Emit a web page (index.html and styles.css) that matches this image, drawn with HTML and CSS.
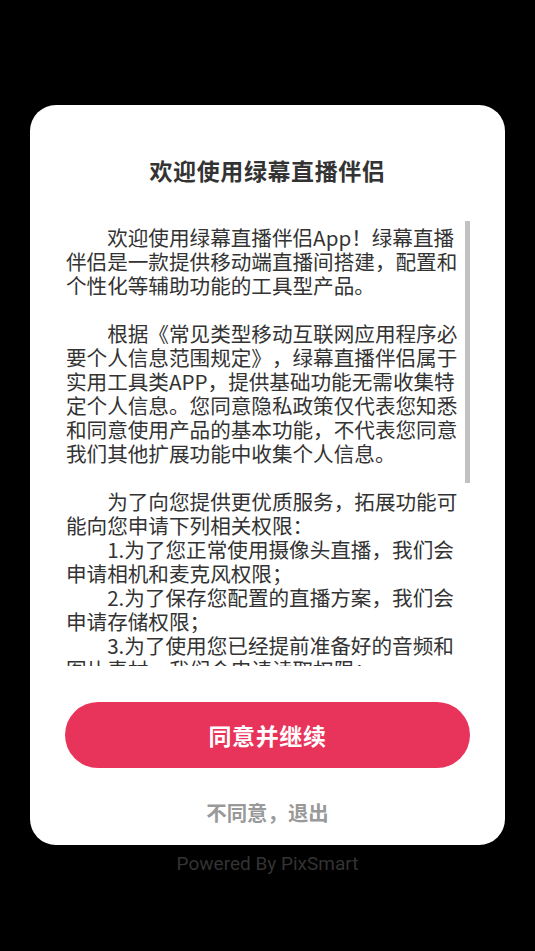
FILE: index.html
```html
<!DOCTYPE html>
<html lang="zh-CN">
<head>
<meta charset="utf-8">
<title>欢迎使用绿幕直播伴侣</title>
<link rel="stylesheet" href="styles.css">
</head>
<body>
<div class="screen">
  <div class="card">
    <h1 class="title">欢迎使用绿幕直播伴侣</h1>
    <div class="scroll-wrap">
      <div class="scroll">
        <p class="para">欢迎使用绿幕直播伴侣App！绿幕直播伴侣是一款提供移动端直播间搭建，配置和个性化等辅助功能的工具型产品。</p>
        <p class="para">根据《常见类型移动互联网应用程序必要个人信息范围规定》，绿幕直播伴侣属于实用工具类APP，提供基础功能无需收集特定个人信息。您同意隐私政策仅代表您知悉和同意使用产品的基本功能，不代表您同意我们其他扩展功能中收集个人信息。</p>
        <p class="line">为了向您提供更优质服务，拓展功能可能向您申请下列相关权限：</p>
        <p class="line">1.为了您正常使用摄像头直播，我们会申请相机和麦克风权限；</p>
        <p class="line">2.为了保存您配置的直播方案，我们会申请存储权限；</p>
        <p class="line">3.为了使用您已经提前准备好的音频和图片素材，我们会申请读取权限；</p>
      </div>
      <div class="thumb"></div>
    </div>
    <button class="agree">同意并继续</button>
    <div class="refuse">不同意，退出</div>
  </div>
  <div class="powered">Powered By PixSmart</div>
</div>
</body>
</html>
```

FILE: styles.css
```css
html, body {
  margin: 0;
  padding: 0;
  background: #000;
}

.screen {
  width: 535px;
  height: 951px;
  padding-top: 105px;
  box-sizing: border-box;
  display: flex;
  flex-direction: column;
  align-items: center;
  font-family: "Noto Sans CJK SC", "Noto Sans", sans-serif;
}

.card {
  width: 475px;
  height: 740px;
  box-sizing: border-box;
  background: #fff;
  border-radius: 26px;
  padding: 50px 0 0 36px;
  display: flex;
  flex-direction: column;
}

.title {
  margin: 0 36px 0 0;
  font-size: 23px;
  line-height: 30px;
  font-weight: 700;
  color: #333;
  text-align: center;
  letter-spacing: 0.6px;
}

.scroll-wrap {
  position: relative;
  margin-top: 36px;
  width: 404px;
  height: 445px;
}

.scroll {
  height: 100%;
  box-sizing: border-box;
  padding: 4px 5px 0 0;
  overflow: hidden;
  color: #333;
  font-size: 20.6px;
  line-height: 24px;
  text-spacing-trim: space-all;
}

.thumb {
  position: absolute;
  top: 0;
  right: 0;
  width: 5px;
  height: 262px;
  background: #c1c1c1;
}

.para,
.line {
  margin: 0;
  text-indent: 2em;
}

.para {
  margin-bottom: 24px;
}

.agree {
  margin: 36px 0 0 -1px;
  width: 405px;
  height: 66px;
  border: none;
  border-radius: 33px;
  background: #e8345a;
  color: #fff;
  font-family: "Noto Sans CJK SC", "Noto Sans", sans-serif;
  font-size: 23px;
  font-weight: 700;
  letter-spacing: 0.6px;
  padding: 0;
}

.refuse {
  margin: 29px 36px 0 0;
  text-align: center;
  font-size: 20.4px;
  line-height: 30px;
  font-weight: 700;
  color: #999;
}

.powered {
  margin-top: 8px;
  font-family: Roboto, "Noto Sans", sans-serif;
  font-size: 19px;
  line-height: 22px;
  color: #333;
}
```
